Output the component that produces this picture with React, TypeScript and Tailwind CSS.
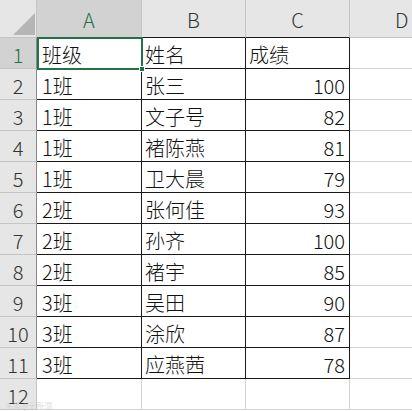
const rows: [string, string, string][] = [
  ["班级", "姓名", "成绩"],
  ["1班", "张三", "100"],
  ["1班", "文子号", "82"],
  ["1班", "褚陈燕", "81"],
  ["1班", "卫大晨", "79"],
  ["2班", "张何佳", "93"],
  ["2班", "孙齐", "100"],
  ["2班", "褚宇", "85"],
  ["3班", "吴田", "90"],
  ["3班", "涂欣", "87"],
  ["3班", "应燕茜", "78"],
];

const font = { fontFamily: '"Noto Sans CJK SC", "Noto Sans", sans-serif' };

const App = () => {
  return (
    <main
      className="relative w-[412px] h-[411px] overflow-hidden bg-white text-[20px] font-light text-[#111]"
      style={font}
    >
      <div className="grid grid-cols-[37px_105px_104px_104px_1fr] grid-rows-[38px_repeat(12,31px)]">
        {/* header row */}
        <div className="relative bg-[#e6e6e6] border-r border-b border-[#c4c4c4]">
          <svg className="absolute left-[13px] top-[13px]" width="22" height="22" viewBox="0 0 22 22">
            <polygon points="22,0 22,22 0,22" fill="#b5b5b5" />
          </svg>
        </div>
        <div className="bg-[#d2d2d2] border-r border-b border-r-[#c4c4c4] border-b-[#217346] flex items-center justify-center pt-[3px] text-[#217346] leading-none">
          A
        </div>
        <div className="bg-[#e6e6e6] border-r border-r-[#c4c4c4] border-b border-b-[#1a1a1a] flex items-center justify-center pt-[3px] text-[#333] leading-none">
          B
        </div>
        <div className="bg-[#e6e6e6] border-r border-r-[#c4c4c4] border-b border-b-[#1a1a1a] flex items-center justify-center pt-[3px] text-[#333] leading-none">
          C
        </div>
        <div className="bg-[#e6e6e6] border-b border-b-[#c4c4c4] flex items-center pl-[45px] pt-[3px] text-[#333] leading-none">
          D
        </div>

        {rows.map((r, i) => (
          <Row key={i} n={i + 1} cells={r} />
        ))}

        {/* row 12 */}
        <div className="bg-[#e6e6e6] border-r border-b border-[#c4c4c4] flex items-center justify-center pt-[3px] text-[#333] leading-none">
          12
        </div>
        <div className="border-r border-b border-[#d4d4d4]" />
        <div className="border-r border-b border-[#d4d4d4]" />
        <div className="border-r border-b border-[#d4d4d4]" />
        <div className="border-b border-[#d4d4d4]" />
      </div>

      {/* active cell outline */}
      <div className="absolute left-[37px] top-[37px] w-[106px] h-[33px] border-2 border-[#217346] pointer-events-none" />
      <div className="absolute left-[139px] top-[66px] w-[6px] h-[6px] bg-[#217346] border border-white" />

      <div className="absolute left-[5px] bottom-[1px] text-[8px] leading-none text-[#cfcfcf]">头条@无所谓</div>
    </main>
  );
};

const Row = ({ n, cells }: { n: number; cells: [string, string, string] }) => {
  const first = n === 1;
  return (
    <>
      <div
        className={
          "border-r border-b border-r-[#8a8a8a] border-b-[#c4c4c4] flex items-center justify-center pt-[3px] leading-none " +
          (first ? "bg-[#d2d2d2] text-[#217346]" : "bg-[#e6e6e6] text-[#333]")
        }
      >
        {n}
      </div>
      <div className="border-r border-b border-[#1a1a1a] flex items-center pl-[5px] pt-[3px] leading-none">{cells[0]}</div>
      <div className="border-r border-b border-[#1a1a1a] flex items-center pl-[3px] pt-[3px] leading-none">{cells[1]}</div>
      <div
        className={
          "border-r border-b border-[#1a1a1a] flex items-center pt-[3px] leading-none " +
          (first ? "pl-[3px]" : "justify-end pr-[4px]")
        }
      >
        {cells[2]}
      </div>
      <div className="border-b border-[#d4d4d4]" />
    </>
  );
};

export default App;
